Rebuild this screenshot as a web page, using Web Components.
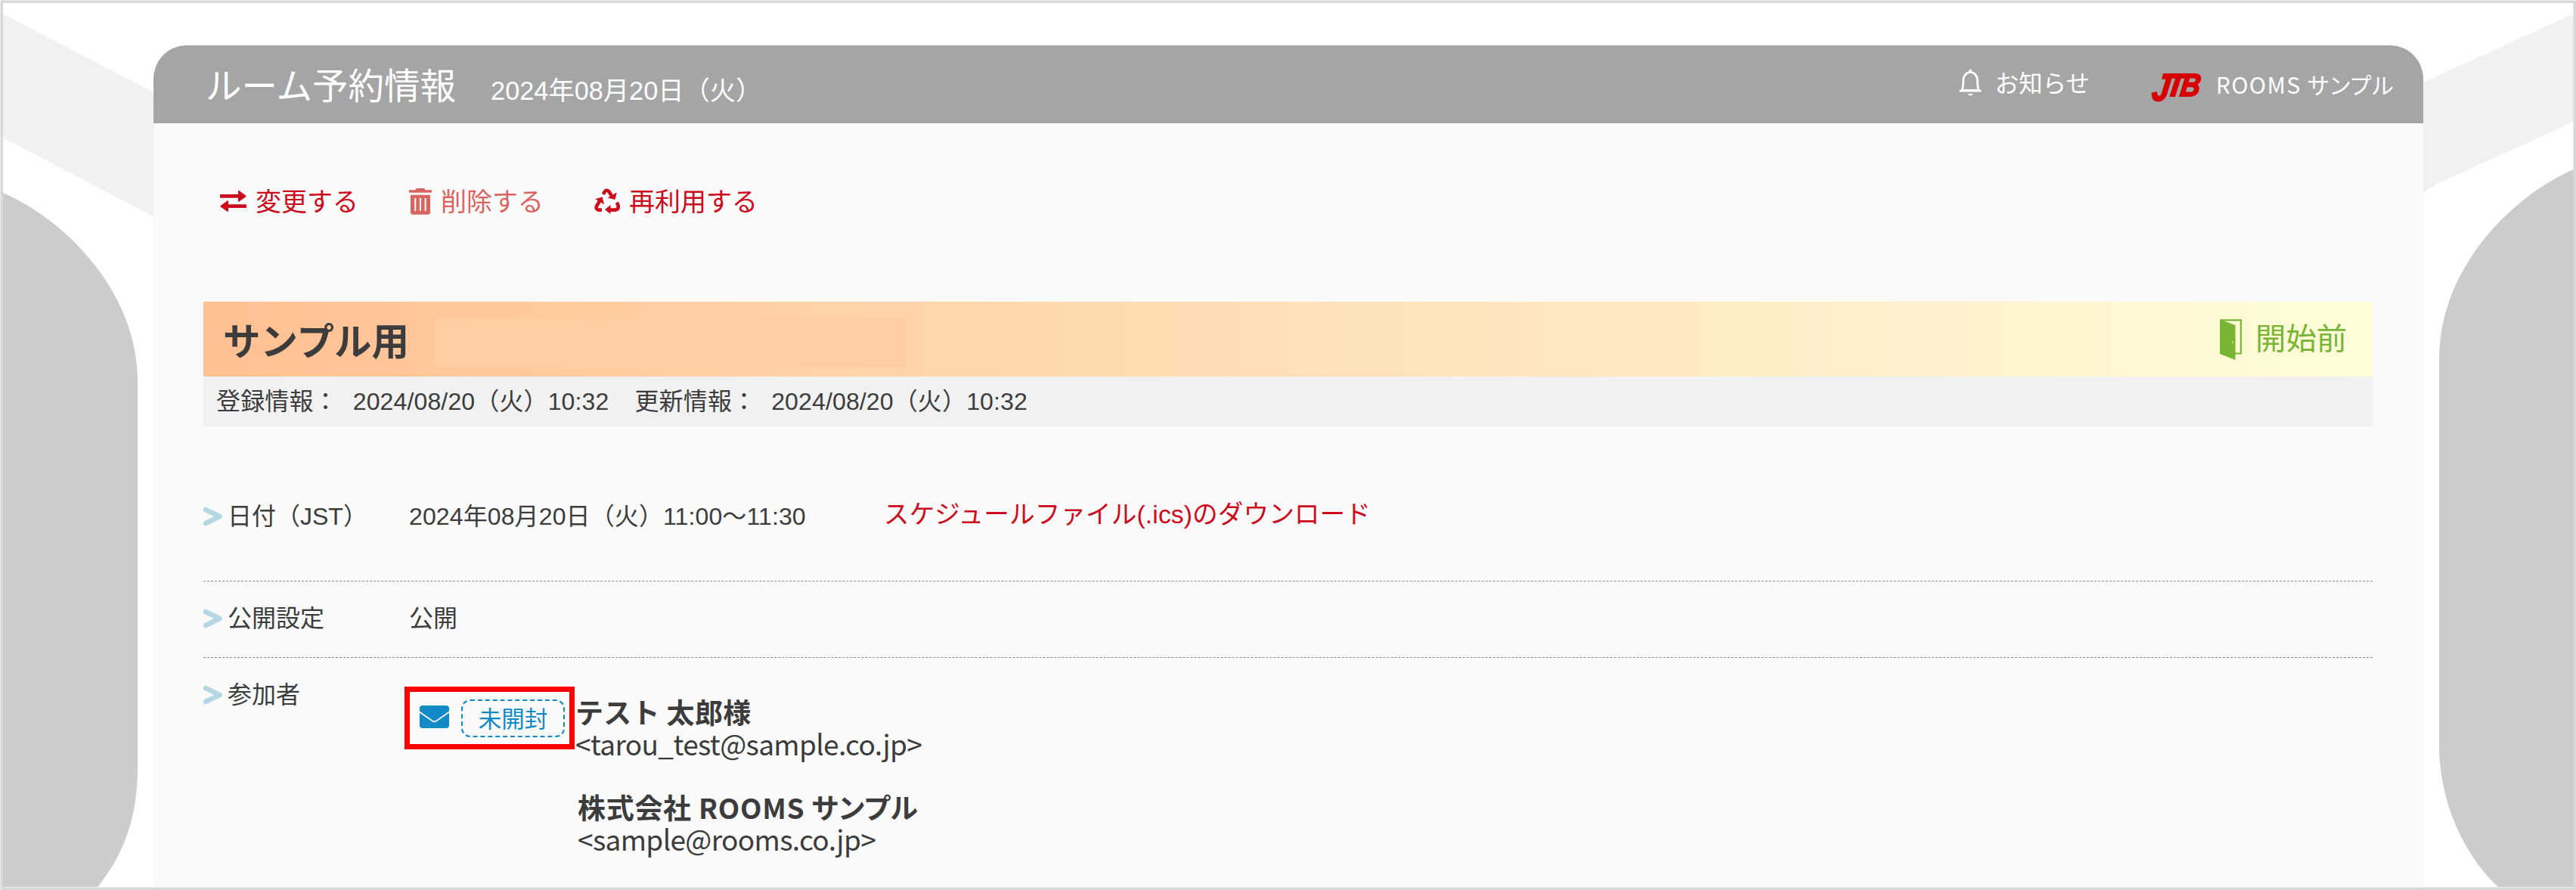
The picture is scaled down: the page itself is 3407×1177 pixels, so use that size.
<!DOCTYPE html>
<html lang="ja">
<head>
<meta charset="UTF-8">
<title>ルーム予約情報</title>
<style>
    html, body {
        margin: 0;
        height: 100%;
    }

    body {
        font-family: "Liberation Sans", "Noto Sans CJK JP", sans-serif;
        font-size: 32px;
        color: #3c3c3c;
        overflow: hidden;
    }
</style>
</head>
<body>
<room-page>
    <room-header slot="header" heading="ルーム予約情報" date="2024年08月20日（火）">
        <header-notice>お知らせ</header-notice>
        <header-account>ROOMS サンプル</header-account>
    </room-header>

    <action-bar>
        <action-link icon="change">変更する</action-link>
        <action-link icon="trash" muted>削除する</action-link>
        <action-link icon="recycle">再利用する</action-link>
    </action-bar>

    <room-banner status="開始前">
        サンプル用
        <span slot="meta">登録情報：</span>
        <span slot="meta">2024/08/20（火）10:32</span>
        <span slot="meta" style="margin-left: 14px">更新情報：</span>
        <span slot="meta">2024/08/20（火）10:32</span>
    </room-banner>

    <detail-row label="日付（JST）" style="--row-height: 172px; --row-top: 62px">
        2024年08月20日（火）11:00〜11:30
        <download-link>スケジュールファイル(.ics)のダウンロード</download-link>
    </detail-row>
    <detail-row label="公開設定" style="--row-height: 100px; --row-top: 26px">公開</detail-row>
    <detail-row label="参加者" last style="--row-top: 26px">
        <mail-status slot="aside">未開封</mail-status>
        <member-list slot="aside">
            <member-item mail="tarou_test@sample.co.jp">テスト 太郎様</member-item>
            <member-item mail="sample@rooms.co.jp" class="company">株式会社 ROOMS サンプル</member-item>
        </member-list>
    </detail-row>
</room-page>

<script>
const define = (name, html) => {
    customElements.define(name, class extends HTMLElement {
        constructor() {
            super();
            this.attachShadow({ mode: 'open' });
        }

        connectedCallback() {
            this.shadowRoot.innerHTML = typeof html === 'function' ? html(this) : html;
        }
    });
};

const icons = {
    change: `
        <svg width="35" height="28" viewBox="0 0 35 28" fill="currentColor">
            <path d="M1 5h23V.8c0-.8.8-1 1.400-.5l8.800 6.400c.6.500.6 1.100 0 1.600l-8.800 6.200c-.6.500-1.400.2-1.400-.6V9.800H1c-.6 0-1-.4-1-1V6c0-.6.4-1 1-1z"/>
            <path d="M34 18.200H11V14c0-.8-.8-1-1.400-.5L.8 19.900c-.6.500-.6 1.100 0 1.600l8.800 6.200c.6.500 1.400.2 1.400-.6V23h23c.6 0 1-.4 1-1v-2.800c0-.6-.4-1-1-1z"/>
        </svg>`,
    trash: `
        <svg width="30" height="35" viewBox="0 0 30 35" fill="currentColor">
            <path d="M10.500 0h9c1 0 1.500 1.600 2 2.200H29c.6 0 1 .4 1 1v1.600c0 .6-.4 1-1 1H1c-.6 0-1-.4-1-1V3.200c0-.6.4-1 1-1h7.500c.5-.6 1-2.200 2-2.200z"/>
            <path fill-rule="evenodd" d="M2 8.800h26V31.500a3.300 3.300 0 0 1-3.300 3.300H5.300A3.300 3.300 0 0 1 2 31.500zM7.200 13v17h2.100V13zm6.700 0v17h2.100V13zm6.700 0v17h2.100V13z"/>
        </svg>`,
    recycle: `
        <svg width="34" height="34" viewBox="0 0 34 34" fill="none" stroke="currentColor" stroke-width="4.600">
            <path d="M11.800 8l2-3.600q2.600-3.200 5.600 0L23 10"/>
            <path d="M10 28.600H5.200Q1.600 27.400 3 23.800L6.800 17"/>
            <path d="M30 18.600l1.600 4.400q.8 4.600-3.400 5.600H20"/>
            <g fill="currentColor" stroke="none">
                <path d="M29.800 5.400L27.400 15 17.600 12.600z"/>
                <path d="M1.200 14.200L10.600 11.600 13 21.200z"/>
                <path d="M21.500 22v12L14 28.200z"/>
            </g>
        </svg>`
};

define('page-backdrop', `
    <style>
        :host { display: block; }
        svg { display: block; width: 100%; height: 100%; }
    </style>
    <svg viewBox="0 0 3407 1177" preserveAspectRatio="none">
        <rect width="3407" height="1177" fill="#fff"/>
        <g fill="#f1f1f1">
            <path d="M4 18.500L203 122V287Q190 279 172 270L4 182z"/>
            <path d="M3404 18L3205 109V255Q3220 243 3243 234L3404 161z"/>
        </g>
        <g fill="#ccc">
            <path d="M4 255C85 290 182 385 182 505V1015C182 1080 164 1130 129 1173H4z"/>
            <path d="M3404 224C3323 259 3226 354 3226 475V985C3226 1060 3258 1130 3304 1173H3404z"/>
        </g>
        <path d="M0 0H3407V1177H0zM4 4V1173.500H3403.500V4z" fill="#d8d8d8" fill-rule="evenodd"/>
        <path d="M.5 1177V.5H3407" fill="none" stroke="#ececec"/>
    </svg>
`);

define('room-page', `
    <style>
        :host { display: grid; height: 1177px; width: 3407px; overflow: hidden; }
        page-backdrop, .sheet { grid-area: 1 / 1; min-height: 0; }
        .sheet {
            margin: 60px 202px 4px 203px;
            background: #fafafa;
            border-radius: 44px 44px 0 0;
            overflow: hidden;
            display: flex;
            flex-direction: column;
        }
        .body { padding: 0 67px 0 66px; }
    </style>
    <page-backdrop></page-backdrop>
    <div class="sheet">
        <slot name="header"></slot>
        <div class="body"><slot></slot></div>
    </div>
`);

define('room-header', (el) => `
    <style>
        :host {
            display: flex;
            align-items: center;
            height: 103px;
            box-sizing: border-box;
            padding: 5px 38px 0 69px;
            background: #a5a5a5;
            color: #fff;
            flex: none;
        }
        h1 { margin: 0; font-size: 47.500px; font-weight: 400; line-height: 60px; padding-top: 2px; }
        time { margin-left: 46px; font-size: 34.300px; line-height: 60px; padding-top: 12px; flex: 1; }
    </style>
    <h1>${el.getAttribute('heading')}</h1>
    <time>${el.getAttribute('date')}</time>
    <slot></slot>
`);

define('header-notice', `
    <style>
        :host { display: flex; align-items: center; gap: 17px; font-size: 31.500px; line-height: 40px; margin-bottom: 6px; }
        svg { margin-bottom: 4px; }
    </style>
    <svg width="30" height="36" viewBox="0 0 30 36" fill="none" stroke="#fff">
        <path d="M15 4.200C8.500 5.500 5.600 9.500 5.600 16c0 6-.4 9-1.600 12.500h22c-1.200-3.500-1.600-6.500-1.600-12.500 0-6.500-2.900-10.500-9.400-11.800z" stroke-width="2.800"/>
        <path d="M.5 29.200h29" stroke-width="2.800"/>
        <path d="M12.800 4.500l1-3.700h2.400l1 3.700zM11.500 33h7q-1.500 2.500-3.500 2.500T11.500 33z" fill="#fff" stroke="none"/>
    </svg>
    <slot></slot>
`);

define('header-account', `
    <style>
        :host {
            display: flex;
            align-items: center;
            gap: 20px;
            margin-left: 81px;
            font: 30px/40px "Noto Sans CJK JP", sans-serif;
            font-feature-settings: "palt";
            letter-spacing: 1.400px;
            white-space: nowrap;
        }
        .name { margin-bottom: 7px; }
    </style>
    <brand-logo></brand-logo>
    <span class="name"><slot></slot></span>
`);

define('brand-logo', `
    <style>
        :host { display: block; width: 66px; height: 40px; letter-spacing: 0; }
        svg { display: block; overflow: visible; }
        text { font: italic 700 42px "Liberation Sans Narrow", "Liberation Sans", sans-serif; fill: #d70000; stroke: #d70000; stroke-width: 2px; }
    </style>
    <svg width="66" height="40" viewBox="0 0 66 40">
        <g transform="translate(4 1) skewX(-8)">
            <text x="1" y="38" style="font-size: 51px" textLength="23" lengthAdjust="spacingAndGlyphs">J</text>
            <text x="19" y="32" textLength="24" lengthAdjust="spacingAndGlyphs">T</text>
            <text x="38" y="32" textLength="26" lengthAdjust="spacingAndGlyphs">B</text>
        </g>
    </svg>
`);

define('action-bar', `
    <style>
        :host { display: flex; height: 236px; box-sizing: border-box; padding: 82px 0 0 22px; gap: 67px; }
    </style>
    <slot></slot>
`);

define('action-link', (el) => `
    <style>
        :host {
            display: flex;
            align-items: center;
            height: 42px;
            font-size: 34px;
            line-height: 42px;
            color: #cc0b1c;
            cursor: pointer;
        }
        :host([muted]) { color: #da6460; }
        svg { flex: none; margin-right: 12px; }
        span { padding-top: 2px; }
    </style>
    ${icons[el.getAttribute('icon')]}
    <span><slot></slot></span>
`);

define('room-banner', (el) => `
    <style>
        :host { display: block; }
        .title {
            display: flex;
            align-items: center;
            height: 99px;
            box-sizing: border-box;
            padding: 0 34px 0 26px;
            background: linear-gradient(90deg, #ffc093, #fffed9);
        }
        h2 { margin: 9px 0 0; font-size: 49.500px; line-height: 60px; white-space: nowrap; width: 280px; }
        .mask { width: 623px; height: 65px; margin-top: 9px; background: #ffcda2; }
        .status { margin-left: auto; display: flex; align-items: center; color: #78b536; font-size: 40.300px; line-height: 50px; }
        .status svg { margin: 0 18px 0 0; }
        .meta {
            display: flex;
            gap: 20px;
            height: 66px;
            line-height: 67px;
            padding-left: 17px;
            letter-spacing: 0.140px;
            background: #f1f1f1;
        }
    </style>
    <div class="title">
        <h2><slot></slot></h2>
        <div class="mask"></div>
        <div class="status">
            <svg width="29" height="54" viewBox="0 0 29 54">
                <path d="M1 1.300H27.800V45.500H20" fill="none" stroke="#78b536" stroke-width="2.200"/>
                <path d="M0 0L7 3 20.500 8V54L0 46z" fill="#78b536"/>
                <path d="M16.500 28.500v4" stroke="#d5e5a0" stroke-width="1.200"/>
            </svg>
            <span>${el.getAttribute('status')}</span>
        </div>
    </div>
    <div class="meta"><slot name="meta"></slot></div>
`);

define('detail-row', (el) => `
    <style>
        :host {
            display: flex;
            align-items: flex-start;
            height: var(--row-height, 300px);
            box-sizing: content-box;
            border-bottom: 1px dashed #8c8c8c;
            white-space: nowrap;
        }
        :host([label^="日付"]) { margin-top: 32px; }
        :host([last]) { border-bottom: 0; }
        .label { display: flex; align-items: center; gap: 7px; width: 272px; line-height: 42px; padding-top: calc(var(--row-top) + 2px); }
        .value { line-height: 42px; padding-top: calc(var(--row-top) + 2px); letter-spacing: 0.120px; }
        :host([label^="日付"]) .label, :host([label^="日付"]) .value { padding-top: calc(var(--row-top) + 4px); }
        .value { display: flex; }
        :host([last]) .value { display: none; }
    </style>
    <div class="label">
        <svg width="25" height="26" viewBox="0 0 25 26" fill="none" stroke="#b5d7e1" stroke-width="6.500" stroke-linecap="round" stroke-linejoin="round">
            <path d="M3 4L21.500 13 3 22"/>
        </svg>
        <span>${el.getAttribute('label')}</span>
    </div>
    <div class="value"><slot></slot></div>
    <slot name="aside"></slot>
`);

define('download-link', `
    <style>
        :host { display: block; margin: -2px 0 0 103px; font-size: 33.600px; letter-spacing: 0.130px; color: #cc0b1c; cursor: pointer; }
    </style>
    <slot></slot>
`);

define('mail-status', `
    <style>
        :host {
            display: flex;
            align-items: center;
            width: 225px;
            height: 83px;
            box-sizing: border-box;
            border: 7px solid #f00;
            margin: 38px 0 0 -6px;
            padding-left: 13px;
            color: #118ac6;
        }
        svg { margin-bottom: 4px; }
        .badge {
            margin-left: 16px;
            width: 137px;
            height: 50px;
            box-sizing: border-box;
            border: 2px dashed #118ac6;
            border-radius: 12px;
            font-size: 30.500px;
            line-height: 48px;
            text-align: center;
        }
    </style>
    <svg width="39" height="30" viewBox="0 0 39 30">
        <rect width="39" height="30" rx="4" fill="#118ac6"/>
        <path d="M-1 8L17 20.500q2.500 1.500 5 0L40 8" fill="none" stroke="#fafafa" stroke-width="1.800"/>
    </svg>
    <span class="badge"><slot></slot></span>
`);

define('member-list', `
    <style>
        :host { display: flex; flex-direction: column; gap: 40px; margin: 50px 0 0 1px; }
    </style>
    <slot></slot>
`);

define('member-item', (el) => `
    <style>
        :host { display: block; font: 37px/43px "Noto Sans CJK JP", sans-serif; height: 86px; }
        :host(.company) { margin-left: 3px; font-feature-settings: "palt"; }
        b, span { display: block; }
        b { line-height: 42px; letter-spacing: 0.300px; }
        :host(.company) b { letter-spacing: 0.700px; }
        span { letter-spacing: -0.650px; }
    </style>
    <b><slot></slot></b>
    <span>&lt;${el.getAttribute('mail')}&gt;</span>
`);
</script>
</body>
</html>
